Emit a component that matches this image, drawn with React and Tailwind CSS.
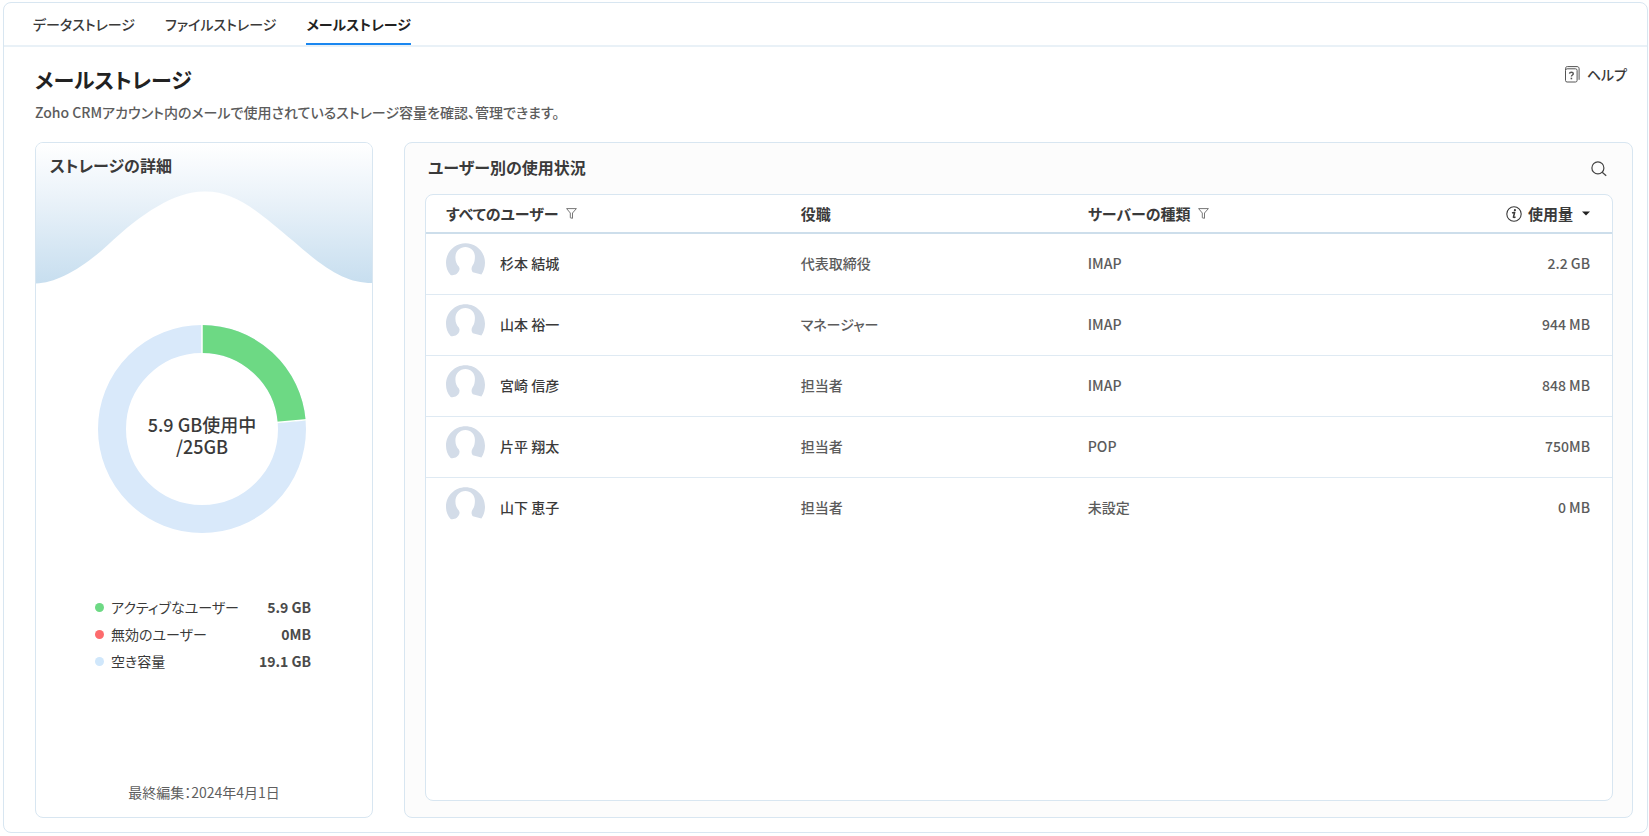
import React, { useState } from 'react';

const tabs = ["データストレージ", "ファイルストレージ", "メールストレージ"];

const legend = [
    { label: "アクティブなユーザー", value: "5.9 GB", dot: "bg-[#6dd984]" },
    { label: "無効のユーザー", value: "0MB", dot: "bg-[#fd6b6d]" },
    { label: "空き容量", value: "19.1 GB", dot: "bg-[#d0e7fb]" },
];

const users = [
    { name: "杉本 結城", role: "代表取締役", server: "IMAP", usage: "2.2 GB" },
    { name: "山本 裕一", role: "マネージャー", server: "IMAP", usage: "944 MB" },
    { name: "宮崎 信彦", role: "担当者", server: "IMAP", usage: "848 MB" },
    { name: "片平 翔太", role: "担当者", server: "POP", usage: "750MB" },
    { name: "山下 恵子", role: "担当者", server: "未設定", usage: "0 MB" },
];

function HelpIcon() {
    return (
        <svg width="15" height="17" viewBox="0 0 15 17" fill="none" stroke="#555" strokeWidth="1">
            <rect x="0.5" y="2.8" width="11.6" height="13.2" rx="1.6" />
            <path d="M0.5 4.2V2.6C0.5 1.3 1.2 0.6 2.4 0.6H12C13.3 0.6 14.1 1.4 14.1 2.7V13.8" />
            <path d="M4.4 7.7C4.6 6.6 5.4 6.2 6.4 6.2C7.6 6.2 8.3 6.8 8.3 7.7C8.3 9 6.4 9 6.4 10.6" strokeWidth="1.4" />
            <path d="M6.4 11.7V13.3" strokeWidth="1.6" />
        </svg>
    );
}

function SearchIcon() {
    return (
        <svg width="16" height="16" viewBox="0 0 16 16" fill="none" stroke="#444" strokeWidth="1.2">
            <circle cx="6.9" cy="6.9" r="6" />
            <path d="M11.2 11.2L15.2 14.8" />
        </svg>
    );
}

function FilterIcon() {
    return (
        <svg width="11" height="11" viewBox="0 0 11 11" fill="none" stroke="#777" strokeWidth="1" strokeLinejoin="round">
            <path d="M0.6 0.6H10.4L6.5 5V10.3L4.3 9.8V5Z" />
        </svg>
    );
}

function InfoIcon() {
    return (
        <svg width="16" height="16" viewBox="0 0 16 16" fill="none" stroke="#3a3a3a">
            <circle cx="8" cy="8" r="7.2" strokeWidth="1.1" />
            <path d="M6.1 7C6.9 6.5 7.6 6.3 8.6 6.5L7.4 11.2C7.9 11.6 8.7 11.4 9.5 10.7" strokeWidth="1.5" />
            <circle cx="8.9" cy="4.2" r="1.1" fill="#3a3a3a" stroke="none" />
        </svg>
    );
}

function Avatar() {
    return (
        <svg width="39" height="33" viewBox="0 0 39 33" fill="#d3dce8">
            <path d="M19.5 0.3C30.2 0.3 39 8.8 39 19.8C39 24.2 37.6 28.4 35.4 31.6L26.8 29.2C25.2 27.6 25.2 24.4 26.6 22.4C28.6 20 28.9 16.8 28.9 13.8C28.9 8 24.6 4.1 19.4 4.1C13.8 4.1 9.4 8.4 9.4 14.4C9.4 18.2 10.6 21.2 12.8 23.4C14.4 25.8 13.4 28.6 10.8 30.8C8.8 32.2 6.6 32.4 4.6 32C1.4 28.4 0 24.2 0 19.8C0 8.8 8.8 0.3 19.5 0.3Z" />
        </svg>
    );
}

function Donut({ used, total }) {
    const r = 90;
    const length = 2 * Math.PI * r;
    const angle = (used / total) * 2 * Math.PI;
    const end = { x: 105 + Math.sin(angle) * 106, y: 105 - Math.cos(angle) * 106 };

    return (
        <div className="relative flex items-center justify-center">
            <svg width="210" height="210" viewBox="0 0 210 210" fill="none">
                <circle cx="105" cy="105" r={r} stroke="#d9e9fa" strokeWidth="28" />
                <circle
                    cx="105"
                    cy="105"
                    r={r}
                    stroke="#6dd984"
                    strokeWidth="28"
                    strokeDasharray={`${(length * used) / total} ${length}`}
                    transform="rotate(-90 105 105)"
                />
                <path d={`M105 0V105L${end.x} ${end.y}`} stroke="#fff" strokeWidth="1.5" />
            </svg>
            <p className="absolute pt-3 text-center text-[18px] leading-[22px] font-medium text-[#3a3a3a]">
                5.9 GB使用中
                <br />
                /25GB
            </p>
        </div>
    );
}

function StorageDetails() {
    return (
        <section className="relative flex w-[338px] shrink-0 flex-col items-center overflow-hidden rounded-lg border border-[#d8e6f1] bg-white">
            <svg className="absolute inset-x-0 top-0 h-[141px] w-full" viewBox="0 0 337 141" preserveAspectRatio="none">
                <defs>
                    <linearGradient id="wave" x1="0" y1="0" x2="0" y2="1">
                        <stop offset="0" stopColor="#fff" />
                        <stop offset="0.35" stopColor="#edf4fa" />
                        <stop offset="1" stopColor="#c7deef" />
                    </linearGradient>
                </defs>
                <path fill="url(#wave)" d="M0 0H337V140C312 140 292 128 258 98C222 68 200 48 169 48.500C140 48 106 70 72 102C46 126 20 140 0 140.500Z" />
            </svg>
            <h2 className="relative w-full px-[14px] pt-[10px] text-[16px] leading-6 font-bold text-[#3a3a3a]">ストレージの詳細</h2>
            <div className="mt-[147px] pr-1">
                <Donut used={5.9} total={25} />
            </div>
            <dl className="mt-[60px] mr-[2px] w-[216px] text-[14px] leading-[27px] text-[#3a3a3a]">
                {legend.map((item) => (
                    <div key={item.label} className="flex items-center">
                        <span className={`mr-[7px] h-[9px] w-[9px] rounded-full ${item.dot}`}></span>
                        <dt className="flex-1">{item.label}</dt>
                        <dd className="font-bold text-[#4a4a4a]">{item.value}</dd>
                    </div>
                ))}
            </dl>
            <p className="mt-auto pb-[13px] text-[14px] leading-6 text-[#5f5f5f]">最終編集：2024年4月1日</p>
        </section>
    );
}

function UsageTable() {
    return (
        <div className="flex-1 overflow-hidden rounded-lg border border-[#d8e6f1] bg-white">
            <table className="w-full table-fixed border-collapse text-left">
                <thead>
                    <tr className="h-[38px] border-b-2 border-[#cddeeb] text-[15px] leading-5 text-[#3a3a3a]">
                        <th className="w-[31.6%] pl-5 font-bold">
                            <button className="flex cursor-pointer items-center gap-[7px]">
                                すべてのユーザー
                                <FilterIcon />
                            </button>
                        </th>
                        <th className="w-[24.2%] font-bold">役職</th>
                        <th className="w-[24.2%] font-bold">
                            <button className="flex cursor-pointer items-center gap-[7px]">
                                サーバーの種類
                                <FilterIcon />
                            </button>
                        </th>
                        <th className="pr-[22px] font-bold">
                            <button className="ml-auto flex cursor-pointer items-center gap-[6px]">
                                <InfoIcon />
                                使用量
                                <svg className="ml-[3px]" width="8" height="5" viewBox="0 0 8 5" fill="#222">
                                    <path d="M0 0.500H8L4 4.500Z" />
                                </svg>
                            </button>
                        </th>
                    </tr>
                </thead>
                <tbody>
                    {users.map((user) => (
                        <tr key={user.name} className="h-[61px] border-b border-[#dfeaf3] text-[14px] leading-5 font-medium text-[#5c5c5c] last:border-0">
                            <td className="pb-[2px] pl-5">
                                <div className="flex items-center gap-[15px] text-[#3a3a3a]">
                                    <span className="pb-[6px]">
                                        <Avatar />
                                    </span>
                                    {user.name}
                                </div>
                            </td>
                            <td className="pb-[2px]">{user.role}</td>
                            <td className="pb-[2px]">{user.server}</td>
                            <td className="pr-[22px] pb-[2px] text-right">{user.usage}</td>
                        </tr>
                    ))}
                </tbody>
            </table>
        </div>
    );
}

function App() {
    const [activeTab, setActiveTab] = useState(2);

    return (
        <div className="flex min-h-screen bg-white pt-[2px] pr-px pb-[3px] pl-[3px] font-['Noto_Sans_CJK_JP','Noto_Sans',sans-serif] [font-feature-settings:'palt']">
            <div className="flex flex-1 flex-col rounded-lg border border-[#d8e6f1]">
                <nav className="flex h-[44px] gap-[30px] border-b-2 border-[#e9f1f7] pl-[29px] text-[14px]">
                    {tabs.map((tab, i) => (
                        <button
                            key={tab}
                            onClick={() => setActiveTab(i)}
                            className={`cursor-pointer border-b-2 pt-[3px] ${
                                i === activeTab ? "border-[#1a87f0] font-bold text-[#222]" : "border-transparent font-medium text-[#3a3a3a]"
                            }`}
                        >
                            {tab}
                        </button>
                    ))}
                </nav>

                <main className="flex flex-1 flex-col pt-[14px] pr-[14px] pb-[14px] pl-[31px]">
                    <div className="flex items-start justify-between">
                        <div>
                            <h1 className="text-[21px] leading-9 font-bold text-[#222]">メールストレージ</h1>
                            <p className="mt-[3px] text-[14px] leading-6 font-medium text-[#5c5c5c]">
                                Zoho CRMアカウント内のメールで使用されているストレージ容量を確認、管理できます。
                            </p>
                        </div>
                        <a href="#help" className="mt-px mr-[6px] flex items-center gap-[7px] text-[14px] leading-6 font-medium text-[#3a3a3a]">
                            <HelpIcon />
                            ヘルプ
                        </a>
                    </div>

                    <div className="mt-[18px] flex flex-1 gap-[31px]">
                        <StorageDetails />
                        <section className="flex flex-1 flex-col rounded-lg border border-[#d8e6f1] bg-[#fcfcfc] pr-[19px] pb-4 pl-5">
                            <div className="flex h-[51px] items-center justify-between pr-[6px] pl-[3px]">
                                <h2 className="pb-[3px] text-[16px] font-bold text-[#3a3a3a]">ユーザー別の使用状況</h2>
                                <button aria-label="検索" className="cursor-pointer">
                                    <SearchIcon />
                                </button>
                            </div>
                            <UsageTable />
                        </section>
                    </div>
                </main>
            </div>
        </div>
    );
}

export default App;
